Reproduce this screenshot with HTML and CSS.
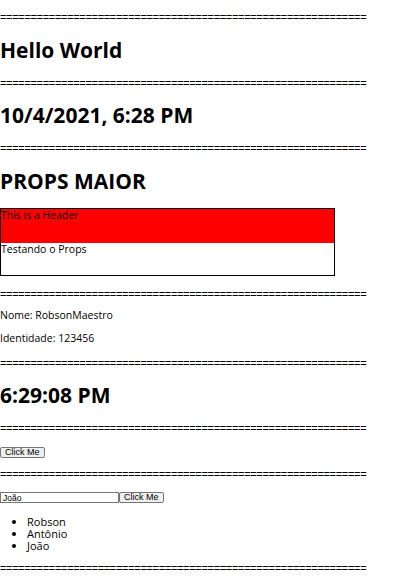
FILE: index.html
```html
<!DOCTYPE html>
<html lang="pt">
<head>
<meta charset="utf-8">
<title>App</title>
<link rel="stylesheet" href="styles.css">
</head>
<body>
<div class="app">
  <p class="sep">============================================================</p>
  <h1 class="title">Hello World</h1>
  <p class="sep">============================================================</p>
  <h1 class="title">10/4/2021, 6:28 PM</h1>
  <p class="sep">============================================================</p>
  <h1 class="title">PROPS MAIOR</h1>
  <div class="card">
    <div class="card-header">This is a Header</div>
    <div class="card-body">Testando o Props</div>
  </div>
  <p class="sep sep-after-card">============================================================</p>
  <p class="text text-first">Nome: RobsonMaestro</p>
  <p class="text text-last">Identidade: 123456</p>
  <p class="sep">============================================================</p>
  <h1 class="title">6:29:08 PM</h1>
  <p class="sep">============================================================</p>
  <div class="row row-button"><button class="btn">Click Me</button></div>
  <p class="sep">============================================================</p>
  <div class="row row-input"><input class="field" type="text" value="João"><button class="btn">Click Me</button></div>
  <ul class="list">
    <li>Robson</li>
    <li>Antônio</li>
    <li>João</li>
  </ul>
  <p class="sep">============================================================</p>
</div>
</body>
</html>
```

FILE: styles.css
```css
html, body {
  margin: 0;
  padding: 0;
  background: #fff;
}

.app {
  padding-top: 1px;
  font-family: "Open Sans", "Noto Sans", sans-serif;
  font-size: 11px;
  line-height: 13px;
  color: #000;
}

.sep {
  margin: 10px 0;
  font-family: "Liberation Sans", Arial, sans-serif;
  font-size: 11px;
  letter-spacing: -0.32px;
  white-space: nowrap;
  overflow: hidden;
}

.title {
  font-size: 21px;
  line-height: 25px;
  font-weight: 700;
  margin: 13.5px 0 14px;
}

.card {
  width: 333px;
  border: 1px solid #000;
  margin: 14px 0 12px;
}

.card-header {
  background: #ff0000;
  height: 34px;
  font-size: 10.5px;
}

.card-body {
  height: 32px;
  font-size: 10.5px;
}

.sep-after-card {
  margin: 12px 0 8px;
}

.text {
  margin: 10px 0;
  font-size: 10.5px;
}

.text-first {
  margin-top: 8px;
}

.text-last {
  margin-bottom: 12px;
}

.row {
  display: flex;
  align-items: stretch;
  height: 11px;
}

.row-button {
  margin: 12px 0 10px;
}

.row-input {
  margin: 11px 0 13px;
}

.btn {
  font-family: "Liberation Sans", Arial, sans-serif;
  font-size: 9px;
  line-height: 9px;
  height: 11px;
  padding: 0 4px;
  margin: 0;
  border: 1px solid #767676;
  border-radius: 2px;
  background: #efefef;
  color: #000;
}

.field {
  font-family: "Liberation Sans", Arial, sans-serif;
  font-size: 8.5px;
  height: 11px;
  width: 119px;
  box-sizing: border-box;
  padding: 0 2px;
  margin: 0;
  border: 1px solid #767676;
  border-radius: 0;
}

.list {
  margin: 13px 0 10px;
  padding-left: 27px;
  font-size: 11px;
  line-height: 12px;
}
```
